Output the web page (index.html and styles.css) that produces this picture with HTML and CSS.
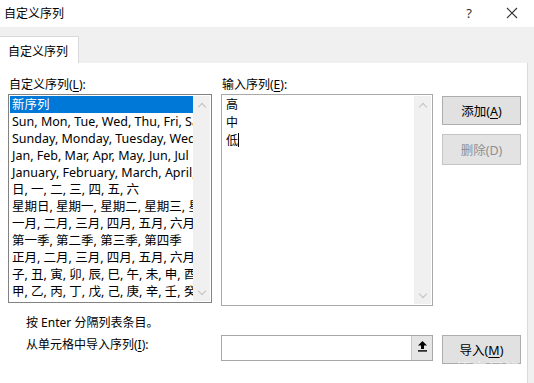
FILE: index.html
```html
<!DOCTYPE html>
<html lang="zh-CN">
  <head>
    <meta charset="UTF-8" />
    <title>自定义序列</title>
    <link rel="stylesheet" href="styles.css">
  </head>
  <body>
    <div class="dialog">
      <div class="titlebar">
        <span class="title">自定义序列</span>
        <div class="title-buttons">
          <span class="help">?</span>
          <svg class="close" width="12" height="12" viewBox="0 0 12 12">
            <path d="M1 1 L11 11 M11 1 L1 11" stroke="#333" stroke-width="1.1" fill="none" />
          </svg>
        </div>
      </div>

      <div class="tabstrip">
        <div class="tab">自定义序列</div>
      </div>

      <div class="main">
        <div class="panel">
          <div class="columns">
            <div class="col-left">
              <div class="label">自定义序列(<u>L</u>):</div>
              <div class="listbox">
                <ul class="items">
                  <li class="selected">新序列</li>
                  <li>Sun, Mon, Tue, Wed, Thu, Fri, Sat</li>
                  <li>Sunday, Monday, Tuesday, Wednesday</li>
                  <li>Jan, Feb, Mar, Apr, May, Jun, Jul</li>
                  <li>January, February, March, April, May</li>
                  <li>日, 一, 二, 三, 四, 五, 六</li>
                  <li>星期日, 星期一, 星期二, 星期三, 星期四</li>
                  <li>一月, 二月, 三月, 四月, 五月, 六月, 七月</li>
                  <li>第一季, 第二季, 第三季, 第四季</li>
                  <li>正月, 二月, 三月, 四月, 五月, 六月, 七月</li>
                  <li>子, 丑, 寅, 卯, 辰, 巳, 午, 未, 申, 酉, 戌</li>
                  <li>甲, 乙, 丙, 丁, 戊, 己, 庚, 辛, 壬, 癸</li>
                </ul>
                <div class="scrollbar">
                  <span class="chev up"></span>
                  <span class="chev down"></span>
                </div>
              </div>
            </div>

            <div class="col-mid">
              <div class="label">输入序列(<u>E</u>):</div>
              <div class="entrybox">
                <div class="lines">
                  <div>高</div>
                  <div>中</div>
                  <div>低<span class="caret"></span></div>
                </div>
                <div class="scrollbar">
                  <span class="chev up"></span>
                  <span class="chev down"></span>
                </div>
              </div>
            </div>

            <div class="col-buttons">
              <button class="btn">添加(<u>A</u>)</button>
              <button class="btn disabled">删除(D)</button>
            </div>
          </div>

          <div class="hint">按 Enter 分隔列表条目。</div>

          <div class="import-row">
            <div class="import-label">从单元格中导入序列(<u>I</u>):</div>
            <div class="refbox">
              <div class="ref-input"></div>
              <div class="ref-btn">
                <svg width="11" height="12" viewBox="0 0 11 12">
                  <path d="M5.5 1 L10 5.5 L7 5.5 L7 9 L4 9 L4 5.5 L1 5.5 Z" fill="#000" />
                  <rect x="1" y="10.2" width="9" height="1.4" fill="#000" />
                </svg>
              </div>
            </div>
            <button class="btn import-btn">导入(<u>M</u>)</button>
          </div>
        </div>
        <div class="side"></div>
      </div>
      <div class="watermark">头条 @悟空问答</div>
    </div>
  </body>
</html>
```

FILE: styles.css
```css
* {
  box-sizing: border-box;
}

body {
  margin: 0;
  font-family: "Noto Sans", "Noto Sans CJK SC", sans-serif;
  font-size: 12px;
  color: #000;
  background: #fff;
}

u {
  text-decoration: underline;
  text-underline-offset: 2px;
}

.dialog {
  position: relative;
  width: 534px;
  height: 383px;
  display: flex;
  flex-direction: column;
  overflow: hidden;
}

.titlebar {
  height: 27px;
  display: flex;
  align-items: center;
  justify-content: space-between;
  padding: 0 16px 2px 4px;
  background: #fff;
}

.title {
  font-size: 12px;
}

.title-buttons {
  display: flex;
  align-items: center;
  gap: 34px;
}

.help {
  font-size: 13px;
  color: #333;
}

.tabstrip {
  height: 36px;
  background: #f0f0f0;
  display: flex;
  align-items: flex-end;
}

.tab {
  width: 79px;
  height: 27px;
  background: #fff;
  border: 1px solid #d9d9d9;
  border-bottom: none;
  border-left: none;
  padding: 5px 0 0 8px;
  font-size: 12px;
}

.main {
  flex: 1;
  display: flex;
}

.panel {
  width: 528px;
  background: #fff;
  border-right: 1px solid #d9d9d9;
  padding: 14px 0 0 8px;
}

.side {
  flex: 1;
  background: #f0f0f0;
}

.columns {
  display: flex;
  align-items: flex-start;
}

.label {
  height: 17px;
  line-height: 15px;
  margin-bottom: 0;
  padding-left: 1px;
}

.col-left {
  width: 204px;
}

.col-mid {
  width: 212px;
  margin-left: 9px;
}

.listbox {
  height: 209px;
  border: 1px solid #828282;
  display: flex;
  padding: 1px;
  overflow: hidden;
}

.items {
  list-style: none;
  margin: 0;
  padding: 0;
  flex: 1;
  overflow: hidden;
}

.items li {
  height: 17px;
  line-height: 17px;
  padding-left: 2px;
  white-space: nowrap;
  overflow: hidden;
  font-size: 12.5px;
}

.items li.selected {
  background: #0078d7;
  color: #fff;
}

.scrollbar {
  width: 17px;
  background: #f0f0f0;
  display: flex;
  flex-direction: column;
  justify-content: space-between;
  align-items: center;
  padding: 6px 0 5px;
}

.chev {
  width: 6px;
  height: 6px;
  border-left: 1px solid #c2c2c2;
  border-top: 1px solid #c2c2c2;
}

.chev.up {
  transform: translateY(2px) rotate(45deg);
}

.chev.down {
  transform: translateY(-2px) rotate(225deg);
}

.entrybox {
  height: 212px;
  border: 1px solid #a8a8a8;
  display: flex;
  padding: 1px;
}

.lines {
  flex: 1;
  padding: 0 0 0 3px;
}

.lines div {
  height: 18px;
  line-height: 18px;
  font-size: 12px;
}

.caret {
  display: inline-block;
  width: 1px;
  height: 14px;
  background: #000;
  vertical-align: -2px;
}

.col-buttons {
  margin-left: 9px;
  padding-top: 19px;
  display: flex;
  flex-direction: column;
  gap: 9px;
}

.btn {
  width: 79px;
  height: 29px;
  background: #e1e1e1;
  border: 1px solid #adadad;
  font-family: "Noto Sans", "Noto Sans CJK SC", sans-serif;
  font-size: 12.5px;
  color: #000;
  padding: 0;
}

.btn.disabled {
  color: #8f8f8f;
  background: #e3e3e3;
  border-color: #c4c4c4;
  height: 31px;
}

.hint {
  margin: 8px 0 0 18px;
  height: 18px;
  line-height: 18px;
}

.import-row {
  display: flex;
  align-items: flex-start;
  margin-top: 3px;
}

.import-label {
  width: 195px;
  margin-left: 18px;
  padding-top: 1px;
  line-height: 18px;
}

.refbox {
  width: 212px;
  height: 26px;
  border: 1px solid #a8a8a8;
  display: flex;
}

.ref-input {
  flex: 1;
}

.ref-btn {
  width: 21px;
  background: #e5e5e5;
  border-left: 1px solid #c8c8c8;
  display: flex;
  align-items: flex-start;
  justify-content: center;
  padding-top: 4px;
}

.import-btn {
  margin-left: 9px;
}

.watermark {
  position: absolute;
  right: 14px;
  bottom: 5px;
  font-size: 15px;
  color: rgba(255, 255, 255, 0.55);
  letter-spacing: 1px;
}
```
